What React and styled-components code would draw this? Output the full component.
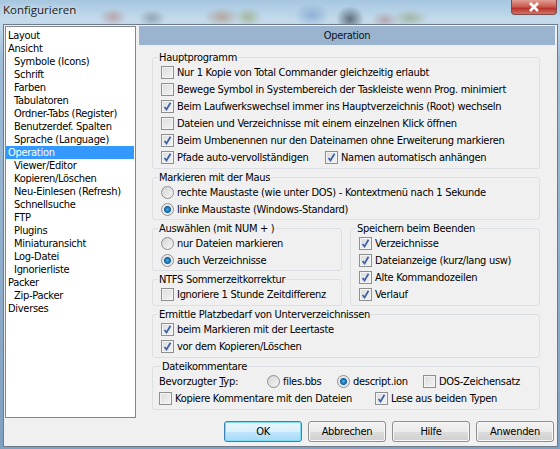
import React from "react";
import styled, { createGlobalStyle } from "styled-components";

const GlobalStyle = createGlobalStyle`
    html, body { margin: 0; padding: 0; overflow: hidden; }
    body {
        font-family: "DejaVu Sans Condensed", "Liberation Sans", Arial, sans-serif;
        font-size: 11px;
        letter-spacing: -0.29px;
        color: #000;
    }
`;

const treeItems = [
    { label: "Layout" },
    { label: "Ansicht" },
    { label: "Symbole (Icons)", sub: true },
    { label: "Schrift", sub: true },
    { label: "Farben", sub: true },
    { label: "Tabulatoren", sub: true },
    { label: "Ordner-Tabs (Register)", sub: true },
    { label: "Benutzerdef. Spalten", sub: true },
    { label: "Sprache (Language)", sub: true },
    { label: "Operation", active: true },
    { label: "Viewer/Editor", sub: true },
    { label: "Kopieren/Löschen", sub: true },
    { label: "Neu-Einlesen (Refresh)", sub: true },
    { label: "Schnellsuche", sub: true },
    { label: "FTP", sub: true },
    { label: "Plugins", sub: true },
    { label: "Miniaturansicht", sub: true },
    { label: "Log-Datei", sub: true },
    { label: "Ignorierliste", sub: true },
    { label: "Packer" },
    { label: "Zip-Packer", sub: true },
    { label: "Diverses" },
];

const Window = styled.div`
    width: 560px;
    height: 449px;
    display: flex;
    flex-direction: column;
    box-sizing: border-box;
    padding: 0 2px 2px 3px;
    background:
        radial-gradient(ellipse 14px 9px at 113px 17px, #b9a6ae, transparent),
        radial-gradient(ellipse 14px 9px at 152px 18px, #93a6b6, transparent),
        radial-gradient(ellipse 18px 10px at 222px 17px, #b3a9a0, transparent),
        radial-gradient(ellipse 14px 10px at 248px 17px, #a6b7a0, transparent),
        radial-gradient(ellipse 18px 12px at 312px 15px, #8fb0d6, transparent),
        radial-gradient(ellipse 14px 13px at 350px 19px, #5f6f7c, transparent),
        radial-gradient(ellipse 14px 9px at 385px 20px, #b3a9b3, transparent),
        radial-gradient(ellipse 18px 9px at 410px 18px, #a3b7a6, transparent),
        linear-gradient(180deg, #a6c6e0 0%, #c4dbec 20px, #9fbdd8 60px, #7fa0bf 100%);
`;

const TitleBar = styled.div`
    height: 24px;
    flex: none;
    display: flex;
    justify-content: space-between;
    align-items: flex-start;
    padding-right: 1px;
`;

const Title = styled.span`
    font-family: "Open Sans", "Liberation Sans", sans-serif;
    font-size: 11.5px;
    letter-spacing: 0;
    line-height: 20px;
    color: #1d1a14;
    text-shadow: 0 0 6px rgba(255, 255, 255, 0.9);
`;

const CloseButton = styled.div`
    width: 46px;
    height: 15px;
    box-sizing: border-box;
    border: 1px solid #7c4a4a;
    border-top: none;
    border-radius: 0 0 4px 4px;
    background: linear-gradient(180deg, #e0a095 0%, #c9564a 50%, #b8322a 60%, #d07468 100%);
    display: flex;
    align-items: center;
    justify-content: center;
`;

const Client = styled.div`
    flex: 1;
    display: flex;
    flex-direction: column;
    background: #f0f0f0;
    border: 1px solid #6f7b88;
    padding: 1px 1px 0 1px;
    min-height: 0;
`;

const Body = styled.div`
    display: flex;
    gap: 3px;
    height: 392px;
`;

const Tree = styled.ul`
    list-style: none;
    margin: 0;
    width: 131px;
    box-sizing: border-box;
    border: 1px solid #82878f;
    background: #fff;
    padding: 2px 0 0 0;
`;

const TreeItem = styled.li`
    height: 13px;
    line-height: 13px;
    white-space: nowrap;
    padding-left: ${p => (p.$sub ? 8 : 2)}px;
    margin-right: 1px;
    background: ${p => (p.$active ? "#3399ff" : "transparent")};
    color: ${p => (p.$active ? "#fff" : "#000")};
`;

const Panel = styled.div`
    width: 416px;
    display: flex;
    flex-direction: column;
`;

const PanelHeader = styled.div`
    height: 19px;
    line-height: 19px;
    flex: none;
    text-align: center;
    background: #9ab3cf;
    color: #0b1420;
`;

const PanelContent = styled.div`
    display: flex;
    flex-direction: column;
    gap: 8px;
    padding: 12px 15px 0 13px;
`;

const Group = styled.div`
    position: relative;
    box-sizing: border-box;
    border: 1px solid #dcdfe3;
    border-radius: 3px;
    padding: 6px 0 1px ${p => p.$indent ?? 8}px;
    height: ${p => p.$height}px;
`;

const Legend = styled.span`
    position: absolute;
    top: -7px;
    left: ${p => p.$left || 5}px;
    height: 13px;
    line-height: 13px;
    padding: 0 1px;
    background: #f0f0f0;
    white-space: nowrap;
`;

const Columns = styled.div`
    display: flex;
    gap: 8px;
`;

const Column = styled.div`
    display: flex;
    flex-direction: column;
    gap: 8px;
    width: 190px;
`;

const Row = styled.div`
    display: flex;
    align-items: center;
    height: 17px;
    white-space: nowrap;
`;

const Spaced = styled.div`
    display: flex;
    align-items: center;
    height: 17px;
    white-space: nowrap;
    width: ${p => p.$width}px;
    flex: none;
`;

const CheckBox = styled.span`
    width: 13px;
    height: 13px;
    flex: none;
    box-sizing: border-box;
    border: 1px solid #8e8f8f;
    background: linear-gradient(135deg, #dcdcdc, #f4f4f4);
    box-shadow: inset 0 0 0 1px #f4f4f4;
    margin-right: 3px;
    display: flex;
    align-items: center;
    justify-content: center;
`;

const RadioDot = styled.span`
    width: 13px;
    height: 13px;
    flex: none;
    box-sizing: border-box;
    border-radius: 50%;
    border: 1px solid #8e8f8f;
    background: ${p => (p.$on
        ? "radial-gradient(circle, #49b4e8 0, #0f5f9e 3px, #e8e8e8 4px, #f2f2f2 100%)"
        : "linear-gradient(135deg, #d4d4d4, #f6f6f6)")};
    margin-right: 3px;
`;

const ButtonRow = styled.div`
    display: flex;
    justify-content: flex-end;
    gap: 6px;
    padding: 3px 2px 0 0;
`;

const Button = styled.button`
    width: 78px;
    height: 21px;
    padding: 0;
    box-sizing: border-box;
    font: inherit;
    letter-spacing: inherit;
    color: #000;
    border: 1px solid ${p => (p.$primary ? "#3c7fb1" : "#8e8f8f")};
    border-radius: 3px;
    background: ${p => (p.$primary
        ? "linear-gradient(180deg, #eaf6fd 0%, #d9f0fc 50%, #bee6fd 51%, #a7d9f5 100%)"
        : "linear-gradient(180deg, #f2f2f2 0%, #ebebeb 50%, #dddddd 51%, #cfcfcf 100%)")};
    box-shadow: inset 0 0 0 1px ${p => (p.$primary ? "#7fdcf5" : "#f8f8f8")};
`;

const Check = ({ on, children }) => (
    <>
        <CheckBox>
            {on && (
                <svg width="9" height="9" viewBox="0 0 9 9">
                    <path d="M1.5 5 L3.5 7.5 L7.5 0.8" fill="none" stroke="#3a5fa8" strokeWidth="1.7" />
                </svg>
            )}
        </CheckBox>
        <span>{children}</span>
    </>
);

const Radio = ({ on, children }) => (
    <>
        <RadioDot $on={on} />
        <span>{children}</span>
    </>
);

export default function App() {
    return (
        <>
            <GlobalStyle />
            <Window>
                <TitleBar>
                    <Title>Konfigurieren</Title>
                    <CloseButton>
                        <svg width="12" height="10" viewBox="0 0 12 10">
                            <path d="M2 1 L10 9 M10 1 L2 9" stroke="#fff" strokeWidth="2.6" />
                        </svg>
                    </CloseButton>
                </TitleBar>
                <Client>
                    <Body>
                        <Tree>
                            {treeItems.map(item => (
                                <TreeItem key={item.label} $sub={item.sub} $active={item.active}>
                                    {item.label}
                                </TreeItem>
                            ))}
                        </Tree>
                        <Panel>
                            <PanelHeader>Operation</PanelHeader>
                            <PanelContent>
                                <Group $height={112}>
                                    <Legend>Hauptprogramm</Legend>
                                    <Row><Check>Nur 1 Kopie von Total Commander gleichzeitig erlaubt</Check></Row>
                                    <Row><Check>Bewege Symbol in Systembereich der Taskleiste wenn Prog. minimiert</Check></Row>
                                    <Row><Check on>Beim Laufwerkswechsel immer ins Hauptverzeichnis (Root) wechseln</Check></Row>
                                    <Row><Check>Dateien und Verzeichnisse mit einem einzelnen Klick öffnen</Check></Row>
                                    <Row><Check on>Beim Umbenennen nur den Dateinamen ohne Erweiterung markieren</Check></Row>
                                    <Row>
                                        <Spaced $width={164}><Check on>Pfade auto-vervollständigen</Check></Spaced>
                                        <Check on>Namen automatisch anhängen</Check>
                                    </Row>
                                </Group>
                                <Group $height={43}>
                                    <Legend>Markieren mit der Maus</Legend>
                                    <Row><Radio>rechte Maustaste (wie unter DOS) - Kontextmenü nach 1 Sekunde</Radio></Row>
                                    <Row><Radio on>linke Maustaste (Windows-Standard)</Radio></Row>
                                </Group>
                                <Columns>
                                    <Column>
                                        <Group $height={43}>
                                            <Legend>Auswählen (mit NUM + )</Legend>
                                            <Row><Radio>nur Dateien markieren</Radio></Row>
                                            <Row><Radio on>auch Verzeichnisse</Radio></Row>
                                        </Group>
                                        <Group $height={27}>
                                            <Legend>NTFS Sommerzeitkorrektur</Legend>
                                            <Row><Check>Ignoriere 1 Stunde Zeitdifferenz</Check></Row>
                                        </Group>
                                    </Column>
                                    <Column>
                                        <Group $height={78}>
                                            <Legend>Speichern beim Beenden</Legend>
                                            <Row><Check on>Verzeichnisse</Check></Row>
                                            <Row><Check on>Dateianzeige (kurz/lang usw)</Check></Row>
                                            <Row><Check on>Alte Kommandozeilen</Check></Row>
                                            <Row><Check on>Verlauf</Check></Row>
                                        </Group>
                                    </Column>
                                </Columns>
                                <Group $height={44}>
                                    <Legend>Ermittle Platzbedarf von Unterverzeichnissen</Legend>
                                    <Row><Check on>beim Markieren mit der Leertaste</Check></Row>
                                    <Row><Check on>vor dem Kopieren/Löschen</Check></Row>
                                </Group>
                                <Group $height={44} $indent={6}>
                                    <Legend $left={8}>Dateikommentare</Legend>
                                    <Row>
                                        <Spaced $width={108}><span>Bevorzugter <u>T</u>yp:</span></Spaced>
                                        <Spaced $width={70}><Radio>files.bbs</Radio></Spaced>
                                        <Spaced $width={86}><Radio on>descript.ion</Radio></Spaced>
                                        <Check>DOS-Zeichensatz</Check>
                                    </Row>
                                    <Row>
                                        <Spaced $width={216}><Check>Kopiere Kommentare mit den Dateien</Check></Spaced>
                                        <Check on>Lese aus beiden Typen</Check>
                                    </Row>
                                </Group>
                            </PanelContent>
                        </Panel>
                    </Body>
                    <ButtonRow>
                        <Button $primary>OK</Button>
                        <Button>Abbrechen</Button>
                        <Button>Hilfe</Button>
                        <Button>Anwenden</Button>
                    </ButtonRow>
                </Client>
            </Window>
        </>
    );
}
